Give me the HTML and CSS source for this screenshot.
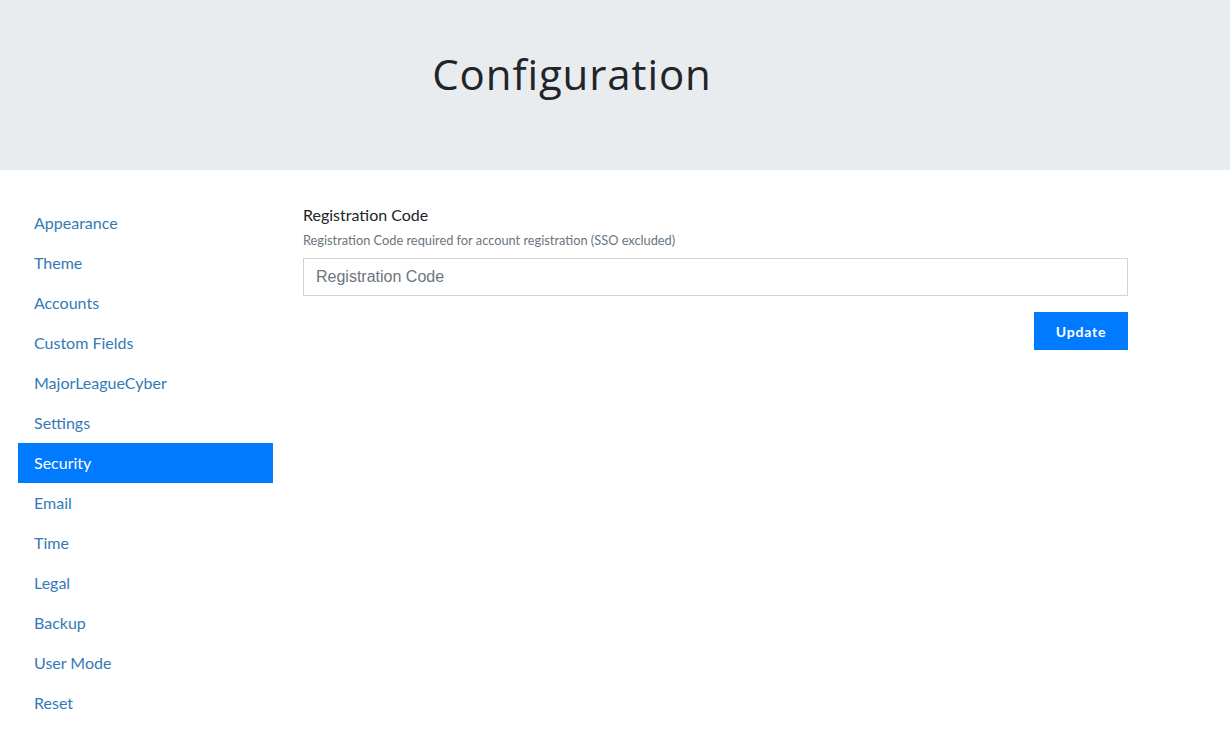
FILE: index.html
```html
<!DOCTYPE html>
<html>
<head>
<meta charset="utf-8">
<link rel="stylesheet" href="styles.css">
</head>
<body>
<header class="jumbotron">
  <div class="jumbo-inner">
    <h1 class="title">Configuration</h1>
  </div>
</header>
<div class="layout">
  <nav class="sidenav">
    <a class="nav-link">Appearance</a>
    <a class="nav-link">Theme</a>
    <a class="nav-link">Accounts</a>
    <a class="nav-link">Custom Fields</a>
    <a class="nav-link">MajorLeagueCyber</a>
    <a class="nav-link">Settings</a>
    <a class="nav-link active">Security</a>
    <a class="nav-link">Email</a>
    <a class="nav-link">Time</a>
    <a class="nav-link">Legal</a>
    <a class="nav-link">Backup</a>
    <a class="nav-link">User Mode</a>
    <a class="nav-link">Reset</a>
  </nav>
  <main class="content">
    <div class="form-group">
      <label class="label">Registration Code</label>
      <small class="help">Registration Code required for account registration (SSO excluded)</small>
      <input class="input" type="text" placeholder="Registration Code">
    </div>
    <div class="actions">
      <button class="btn">Update</button>
    </div>
  </main>
</div>
</body>
</html>
```

FILE: styles.css
```css
* { box-sizing: border-box; }
html, body { margin: 0; padding: 0; }
body {
  font-family: Lato, "Liberation Sans", sans-serif;
  background: #fff;
  color: #212529;
  width: 1230px;
  height: 741px;
  overflow: hidden;
}
.jumbotron {
  background: #e9ecef;
  height: 170px;
  display: flex;
  align-items: center;
}
.jumbo-inner {
  width: 1144px;
  text-align: center;
}
.title {
  margin: 0;
  font-family: "Open Sans", Lato, sans-serif;
  font-weight: 400;
  font-size: 42px;
  letter-spacing: 0.9px;
  color: #212529;
  line-height: 1;
  padding-bottom: 22px;
}
.layout {
  display: flex;
  padding: 33px 0 0 18px;
  gap: 30px;
}
.sidenav {
  width: 255px;
  display: flex;
  flex-direction: column;
}
.nav-link {
  display: block;
  height: 40px;
  line-height: 40px;
  padding: 0 16px;
  font-size: 16px;
  color: #337ab7;
}
.nav-link.active {
  background: #007bff;
  color: #fff;
}
.content {
  width: 825px;
}
.form-group {
  display: flex;
  flex-direction: column;
}
.label {
  font-size: 16px;
  line-height: 24px;
  margin-top: 0;
  color: #212529;
}
.help {
  font-size: 12.8px;
  line-height: 19px;
  color: #6c757d;
  margin-top: 4px;
  margin-bottom: 8px;
}
.input {
  height: 38px;
  border: 1px solid #ced4da;
  border-radius: 0;
  padding: 0 12px;
  font-family: "Liberation Sans", Arial, sans-serif;
  font-size: 16px;
  color: #495057;
  outline: none;
}
.input::placeholder { color: #6c757d; }
.actions {
  display: flex;
  justify-content: flex-end;
  margin-top: 16px;
}
.btn {
  width: 94px;
  height: 38px;
  border: 0;
  border-radius: 0;
  background: #007bff;
  color: #fff;
  font-family: Lato, sans-serif;
  font-weight: 700;
  font-size: 14px;
  letter-spacing: 0.8px;
}
```
